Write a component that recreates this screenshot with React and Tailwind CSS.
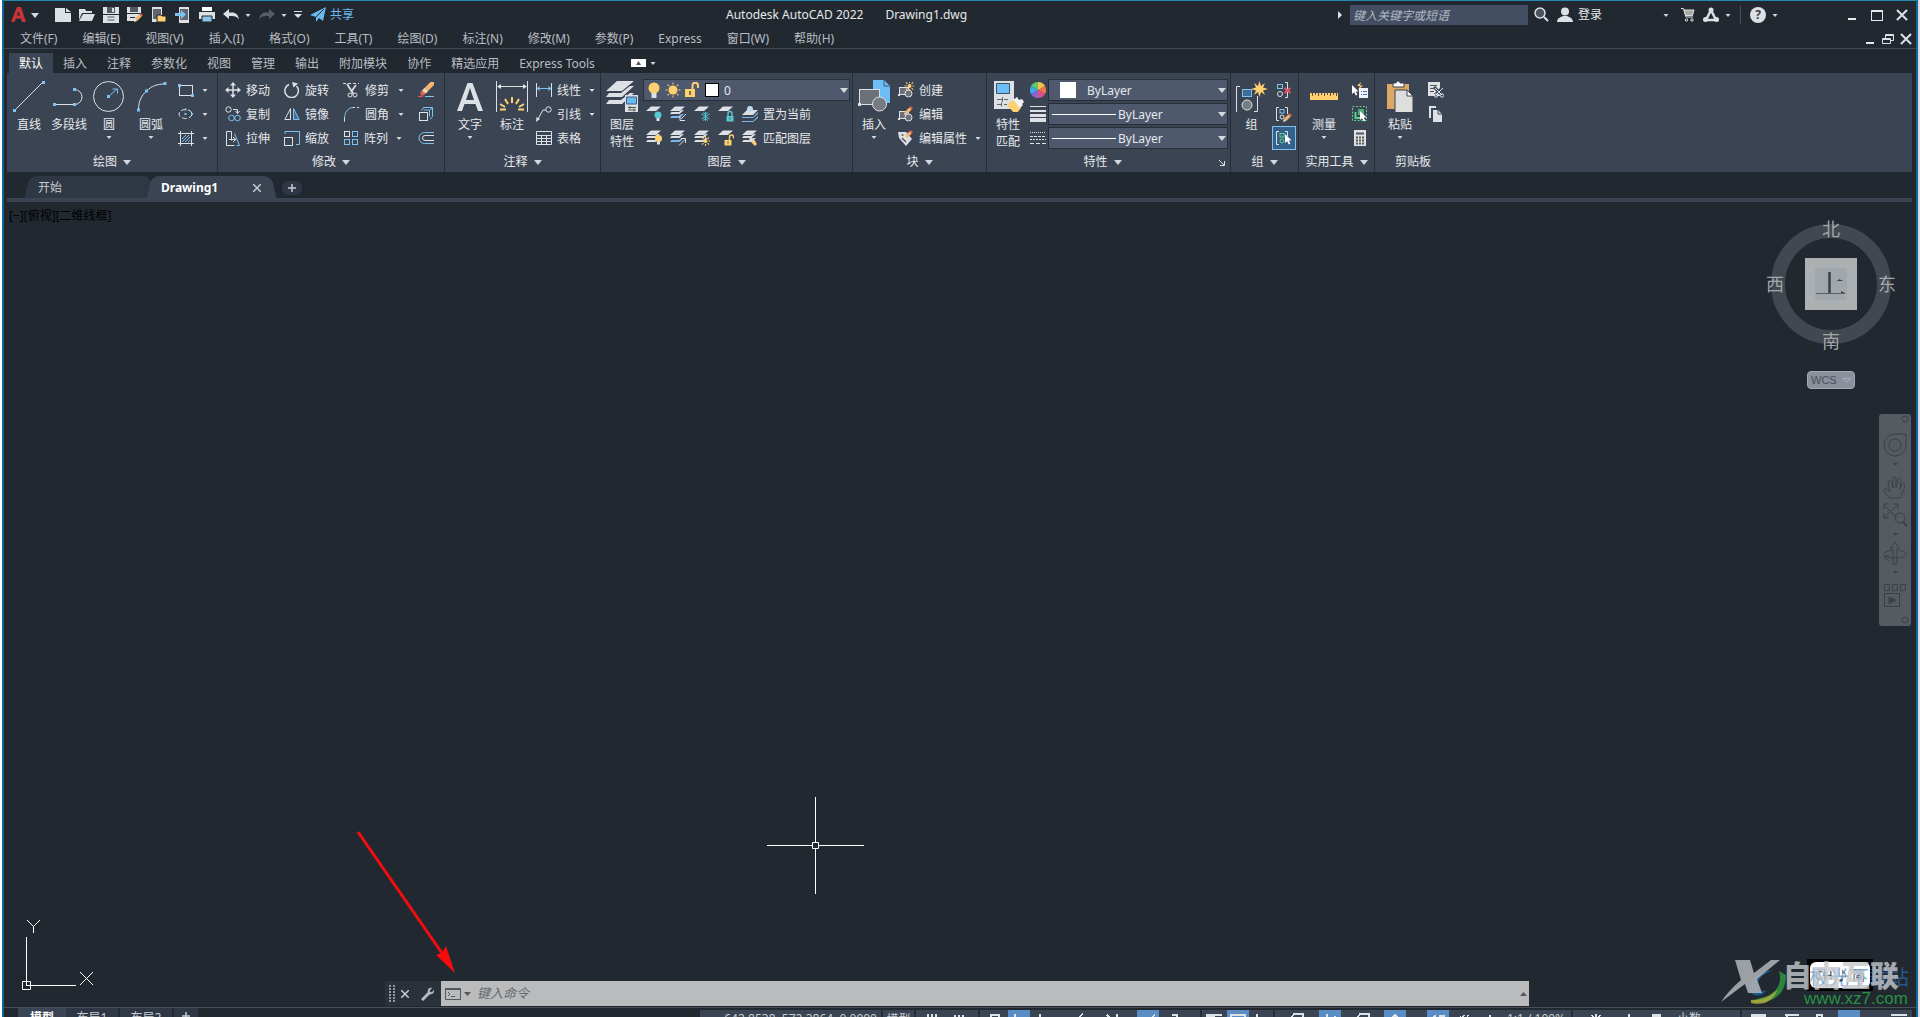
const W = "#dde0e4";
const B = "#7cc3f4";
const Y = "#ffd070";
const C = "#57c9d0";

const MENUS = ["文件(F)", "编辑(E)", "视图(V)", "插入(I)", "格式(O)", "工具(T)", "绘图(D)", "标注(N)", "修改(M)", "参数(P)", "Express", "窗口(W)", "帮助(H)"];
const TABS = ["默认", "插入", "注释", "参数化", "视图", "管理", "输出", "附加模块", "协作", "精选应用", "Express Tools"];

function Icon({ size = 16, children, className = "" }) {
  return (
    <svg width={size} height={size} viewBox={`0 0 ${size} ${size}`} fill="none" stroke={W} className={`shrink-0 ${className}`} aria-hidden="true">
      {children}
    </svg>
  );
}

function Caret({ large, className = "" }) {
  return large ? (
    <svg width="8" height="5" viewBox="0 0 8 5" className={`shrink-0 ${className}`} aria-hidden="true"><path d="M0 0h8L4 5z" fill="#d5d8dd" /></svg>
  ) : (
    <svg width="6" height="3" viewBox="0 0 6 3" className={`shrink-0 ${className}`} aria-hidden="true"><path d="M.5 0h5L3 3z" fill="#d5d8dd" /></svg>
  );
}

function Nodes({ at, s = 3 }) {
  return at.map(([x, y]) => <rect key={`${x}-${y}`} x={x - s / 2} y={y - s / 2} width={s} height={s} fill={B} stroke="none" />);
}

function Sheets({ n = 1, last = W }) {
  const tops = [0, 4, 8].slice(0, n);
  return (
    <g stroke="none">
      {tops.map((y, i) =>
        i === 0 ? (
          <path key={y} d="M5 0.5h10l-5 4.5H0z" fill={W} />
        ) : (
          <path key={y} d={`M1.5 ${y + 2}L0 ${y + 4}h9.5L14 ${y}h-2.5L9 ${y + 2}z`} fill={i === n - 1 ? last : W} />
        )
      )}
    </g>
  );
}

function Cursor({ x, y }) {
  return <path d={`M${x} ${y}v9l2.2-1.8 1.6 3.3 1.6-.8-1.6-3.2h2.8z`} fill="#fff" stroke="none" />;
}

function Pencil({ x, y }) {
  return (
    <g transform={`translate(${x} ${y})`} stroke="none">
      <path d="M0 9l1-3.2L3.2 8z" fill="#f3e3cf" />
      <path d="M1 5.8L5.5 1.3 7.7 3.5 3.2 8z" fill="#f2b56b" />
      <path d="M5.5 1.3L6.8 0 9 2.2 7.7 3.5z" fill="#dc5a52" />
    </g>
  );
}

function Bulb({ x, y, fill }) {
  return (
    <g stroke="none">
      <circle cx={x} cy={y} r="3.5" fill={fill} />
      <path d={`M${x - 1.5} ${y + 3}h3v3h-3z`} fill={W} />
    </g>
  );
}

function Sun({ x, y, r = 3 }) {
  return (
    <g stroke={Y}>
      <circle cx={x} cy={y} r={r} fill={Y} stroke="none" />
      {[0, 45, 90, 135, 180, 225, 270, 315].map((a) => (
        <path key={a} d={`M${x} ${y - r - 1}v-2`} transform={`rotate(${a} ${x} ${y})`} />
      ))}
    </g>
  );
}

function Lock({ x, y, fill, open }) {
  return (
    <g stroke={fill} strokeWidth="1.4">
      <path d={open ? `M${x + 5} ${y}v-3a2 2 0 0 1 4 0v1.5` : `M${x + 1.5} ${y}v-2.5a2 2 0 0 1 4 0V${y}`} />
      <rect x={x} y={y} width="7" height="5.5" fill={fill} stroke="none" />
      <path d={`M${x + 3.5} ${y + 1.5}v2`} stroke="#4a4f57" strokeWidth="1" />
    </g>
  );
}

function Block() {
  return (
    <g>
      <rect x="1.5" y="5.5" width="9" height="7" fill="#6b7079" />
      <circle cx="10.5" cy="11.5" r="3.5" fill="#6b7079" />
      <rect x="0" y="12" width="2" height="2" fill={W} stroke="none" />
    </g>
  );
}

const icons = {
  line: <Icon size={32}><path d="M1.5 30.5l28-28" /><Nodes at={[[1.5, 30.5], [30.5, 2.5]]} /></Icon>,
  pline: <Icon size={32}><path d="M1.5 24.5h20a7.5 7.5 0 0 0 0-15" /><Nodes at={[[1.5, 24.5], [21.5, 24.5], [21.5, 9.5]]} /></Icon>,
  circle: <Icon size={32}><circle cx="15.5" cy="16.5" r="15" /><path d="M15.5 16.5L24 9m-4.500 0H24.500v4.500" stroke={B} /><Nodes at={[[15.5, 16.5]]} /></Icon>,
  arc: <Icon size={32}><path d="M3.500 29.500c0-8 3-14 8-18.500 5-5 11-7 18-7" /><Nodes at={[[3.5, 30], [11.5, 11], [30, 3.5]]} /></Icon>,
  rect: <Icon><rect x="1.500" y="3.500" width="13" height="10" /><Nodes at={[[1.5, 3.5], [14.5, 13.5]]} /></Icon>,
  ellipse: <Icon><ellipse cx="7.500" cy="8" rx="6.500" ry="4.500" strokeDasharray="5 2" /><Nodes at={[[7.5, 8], [14, 8], [7.5, 3.5]]} s={2} /></Icon>,
  hatch: <Icon><path d="M0 3.500h16M0 13.500h16M2.500 1v15M13.500 1v15" /><path d="M4 9l4-4M4 12l7-7M7 12l5-5M10 12l2-2" stroke={B} /></Icon>,
  move: <Icon><path d="M8 1v14M1 8h14" strokeWidth="1.500" /><path d="M8 0l3 3.500H5zM8 16l3-3.500H5zM0 8l3.500-3v6zM16 8l-3.500-3v6z" fill={W} stroke="none" /></Icon>,
  copy: <Icon><circle cx="3.500" cy="3.500" r="2.700" /><circle cx="6.500" cy="12" r="2.800" stroke={B} /><circle cx="12.500" cy="12" r="2.800" stroke={B} /><path d="M8 3.500h4.500V7M10.500 5l2 2.500 2-2.500" /></Icon>,
  stretch: <Icon><path d="M9.500 15.500H1.500V1.500h5v9M4 9.500h6M8 7l3 2.500L8 12" /><path d="M9.500 3.500l5 12h-3" stroke={B} /></Icon>,
  rotate: <Icon><path d="M5 2.500A6.800 6.800 0 1 0 12.500 4" strokeWidth="1.500" /><path d="M8 0l6 1.500-4.500 4z" fill={W} stroke="none" /></Icon>,
  mirror: <Icon><path d="M6.500 2.500v11H.800z" /><path d="M9.500 2.500v11h5.700z" stroke={B} fill="#417095" /></Icon>,
  scale: <Icon><rect x=".500" y="7.500" width="8" height="8" /><path d="M1 4V1.500h14.500v13H12" stroke={B} /></Icon>,
  trim: <Icon><path d="M0 1.500h16" strokeDasharray="3 2" /><path d="M4 2l6.500 10M13 3L8 10" strokeWidth="1.700" /><circle cx="7" cy="13" r="2" /><circle cx="12" cy="13" r="2" /></Icon>,
  fillet: <Icon><path d="M1.500 15.500V13C1.500 6 5 2 10 1.500" stroke={B} /><path d="M1.500 15.500v-4M10 1.500h2m2 0h2" /></Icon>,
  array: <Icon><rect x="1.500" y="1.500" width="5" height="5" /><rect x="9.500" y="1.500" width="5" height="5" stroke={B} /><rect x="1.500" y="9.500" width="5" height="5" stroke={B} /><rect x="9.500" y="9.500" width="5" height="5" stroke={B} /></Icon>,
  erase: <Icon><path d="M0 14.500h5" stroke="#e0584f" /><path d="M7 14.500h9" stroke={B} /><path d="M3.500 9l9-9H16v3l-9 9z" fill="#f5b56c" stroke="none" /><path d="M3.500 9l3.500 3.200-1.500 1.300H2.500V10z" fill="#e55b5b" stroke="none" /><path d="M5.500 7L9 10.200" strokeWidth="2" /></Icon>,
  explode: <Icon><rect x="1.500" y="6.500" width="8" height="8" /><path d="M3.500 4.500l2-3h9v9l-2.500 3M5.500 4h6v6.500M12 4l2.500-2.500" stroke={B} /></Icon>,
  offset: <Icon><path d="M16 2.500H6.500a5.500 5.500 0 0 0 0 11H16" stroke={B} /><path d="M16 5.500H7a2.500 2.500 0 0 0 0 5H16" /></Icon>,
  dim: <Icon size={32}><path d="M.500 1v31M31.500 1v31M2 6.500h28" /><path d="M1 6.500L5 4v5zM31 6.500L27 4v5z" fill={W} stroke="none" /><path d="M16 17v6M9 19l3 5M23 19l-3 5M4 24l5 3M28 24l-5 3M4 29.500h6M22 29.500h6" stroke={Y} strokeWidth="2" /></Icon>,
  linear: <Icon><path d="M.500 1v14M15.500 1v14" /><path d="M1 6.500h14M4 4.500l-3 2 3 2M12 4.500l3 2-3 2" stroke={B} /></Icon>,
  leader: <Icon><circle cx="12.500" cy="3.500" r="2.700" /><path d="M10 4H7L2 13" /><path d="M0 16l.5-5 3.500 2z" fill={W} stroke="none" /></Icon>,
  table: <Icon><path d="M.500 1.500h15v13H.500zM.500 5.500h15M.500 8.500h15M.500 11.500h15M5.500 5v9M10.500 5v9" /></Icon>,
  layerProps: (
    <Icon size={32}>
      <g stroke="none" fill={W}>
        <path d="M11 1h17L16 11H0z" /><path d="M3 13l-3 4h16L28 6h-4L15 13z" /><path d="M3 20l-3 4h16L28 13h-4L15 20z" />
        <path d="M19 15h13v17H19z" /><path d="M20.500 17h10v7h-10z" fill="#6cb9f2" stroke="#3c5f80" />
        <path d="M22 27.500h8M22 30h8M24 26v3M28 28.500v3" stroke="#555" />
      </g>
    </Icon>
  ),
  layOff: <Icon><Sheets /><Bulb x={12} y={9} fill={C} /></Icon>,
  layIso: <Icon><Sheets n={3} last="#77b7ec" /><path d="M16 8l-5 5M10 9.500v5h5" /></Icon>,
  layFreeze: <Icon><Sheets /><path d="M11.500 6v9M7.500 8l8 5M15.500 8l-8 5M9 6.500l2.500 2 2.500-2M9 14.500l2.500-2 2.500 2" stroke={C} /></Icon>,
  layLock: <Icon><Sheets /><Lock x={8.5} y={10} fill={C} /></Icon>,
  layCurrent: <Icon><g stroke="none"><path d="M5 4h11l-5 5H0z" fill={W} /><circle cx="8" cy="3" r="3" fill="#bfd9ee" /><path d="M1.500 9.500L0 11h11l5-5v2l-5 4H0z" fill="#77b7ec" /><path d="M0 15h11l5-5v2l-5 4H0z" fill="#77b7ec" /></g></Icon>,
  layOn: <Icon><Sheets n={3} /><Bulb x={12.5} y={8.5} fill={Y} /></Icon>,
  layUniso: <Icon><Sheets n={3} last="#77b7ec" /><path d="M9 15.500l6-6M11 8.500h4.500V13" /></Icon>,
  layThaw: <Icon><Sheets n={3} /><Sun x={11.5} y={11} r={2} /></Icon>,
  layUnlock: <Icon><Sheets /><Lock x={6.5} y={10} fill={Y} open /></Icon>,
  layMatch: <Icon><Sheets n={3} /><path d="M8 8l5 5" strokeWidth="3" /><path d="M11 10l4 4-2 2-4-4z" fill={Y} stroke="none" /></Icon>,
  insert: <Icon size={32}><path d="M15 0h11l6 6v17H15z" fill="#6dbdf7" stroke="none" /><path d="M26 0v6h6" stroke="#3a5a78" /><rect x="1.500" y="9.500" width="20" height="15" fill="#6b7079" /><circle cx="21.500" cy="24" r="7" fill="#777b82" /><rect x="0" y="23" width="3" height="3" fill={W} stroke="none" /></Icon>,
  create: <Icon><Block /><Sun x={11.5} y={4} r={2} /></Icon>,
  edit: <Icon><Block /><Pencil x={6} y={0} /></Icon>,
  editAttr: <Icon><path d="M0 2h8l6 7-6 7-7-8z" fill={W} stroke="none" /><path d="M3.500 5l2 0M4 8l4 4" stroke="#555" strokeWidth="1.500" /><Pencil x={6} y={0} /></Icon>,
  matchProps: <Icon size={32}><path d="M2 1h20v28H2z" fill={W} stroke="none" /><path d="M4.500 3.500h13v10h-13z" fill="#6dbdf7" stroke="#3c5265" /><path d="M5 19.500h5M12 19.500h4M5 24.500h4M12 24.500h3M10.500 17v5M9.500 22.500v4" stroke="#666" /><path d="M15 25l6-5 8 8-4 5h-3z" fill={Y} stroke="none" /><path d="M21 20l4-3 2 3 3-1 2 3-2 2 1 1-3 3z" fill="#f3f3f3" stroke="none" /></Icon>,
  wheel: (
    <Icon>
      <g stroke="none">
        <path d="M8 8V0a8 8 0 0 1 7 4z" fill="#f5c34c" /><path d="M8 8l7-4a8 8 0 0 1 0 8z" fill="#f0754c" /><path d="M8 8l7 4a8 8 0 0 1-7 4z" fill="#d9508b" />
        <path d="M8 8v8a8 8 0 0 1-7-4z" fill="#8a63d8" /><path d="M8 8l-7 4a8 8 0 0 1 0-8z" fill="#41a5e8" /><path d="M8 8L1 4a8 8 0 0 1 7-4z" fill="#62c370" />
      </g>
    </Icon>
  ),
  weights: <Icon><g fill={W} stroke="none"><path d="M0 0h16v1H0zM0 4h16v2H0zM0 8h16v3H0zM0 12h16v4H0z" /></g></Icon>,
  types: <Icon><path d="M0 2.500h16" strokeDasharray="1 1" /><path d="M0 6.500h16" strokeDasharray="3 1" /><path d="M0 9.500h16" strokeDasharray="2 1" /><path d="M0 13.500h16" strokeDasharray="4 2" /></Icon>,
  group: <Icon size={32}><path d="M4 6.500H.500v26H4M18 31.500h3.500V16" /><rect x="6.500" y="9.500" width="9" height="7" fill="#3d6c96" stroke={B} /><circle cx="11" cy="25" r="5" fill="#777b82" /><path d="M23.500 1l1.500 5 4-3-2 4.500 5 1.500-5 1.500 2 4.500-4-3-1.500 5-1.500-5-4 3 2-4.500-5-1.500 5-1.500-2-4.500 4 3z" fill={Y} stroke="none" /></Icon>,
  ungroup: <Icon><rect x="1.500" y="2.500" width="5" height="4" stroke={B} /><circle cx="4" cy="12" r="2.500" /><path d="M9 .500h2.500v15H9" /><path d="M8.500 6l6 5M14.500 6l-6 5" stroke="#e5546a" strokeWidth="2" /></Icon>,
  groupEdit: <Icon><path d="M3 1.500H.500v13H3M9 1.500h2.500V8" /><rect x="4" y="3.500" width="4" height="3.500" stroke={B} /><circle cx="6" cy="11" r="2" /><Pencil x={7} y={7} /></Icon>,
  groupSel: <Icon><path d="M3 1.500H.500v13H3M9 1.500h2.500V6" /><rect x="4" y="3.500" width="4" height="3.500" stroke="#5fcf8e" /><circle cx="6" cy="11" r="2" stroke="#5fcf8e" /><Cursor x={9} y={4} /></Icon>,
  measure: <Icon size={32}><path d="M2 13h28v7H2z" fill={Y} stroke="none" /><path d="M4.500 13v3M7.500 13v2M10.500 13v3M13.500 13v2M16.500 13v3M19.500 13v2M22.500 13v3M25.500 13v2M28.500 13v3" stroke="#5a5140" /></Icon>,
  quickSel: <Icon><path d="M9 0L5 4h3L6 8l5-4.500H8z" fill={Y} stroke="none" /><rect x="7" y="6" width="9" height="10" fill="#eef2f6" stroke="none" /><path d="M9 9.500h1M11 9.500h4M9 12.500h1M11 12.500h4" stroke="#3d79b4" /><Cursor x={0} y={3} /></Icon>,
  selectAll: <Icon><rect x=".500" y=".500" width="14" height="14" stroke="#5fcf8e" strokeDasharray="2 1.500" /><path d="M6 3h6v6H6z" fill="#4cae75" stroke="none" /><path d="M3.500 6v6h6" stroke="#5fcf8e" strokeWidth="2" /><Cursor x={8} y={5} /></Icon>,
  calc: <Icon><path d="M2 0h12v16H2z" fill={W} stroke="none" /><path d="M4 3.500h8" stroke="#555" strokeWidth="2" /><path d="M4 7.500h8M4 10.500h8M4 13.500h8" stroke="#555" strokeWidth="2" strokeDasharray="2 1" /></Icon>,
  paste: <Icon size={32}><path d="M3 4h22v25H3z" fill="#dca866" stroke="none" /><path d="M9 7V3h3a2 2 0 0 1 4 0h4v4z" fill="#fff" stroke="#3b4453" strokeWidth="1" /><path d="M11 10h12l6 6v17H11z" fill="#dedede" stroke="#3b4453" /><path d="M23 10v6h6z" fill="#fff" stroke="#3b4453" /></Icon>,
  cut: <Icon><path d="M0 0h12v14H0z" fill={W} stroke="none" /><path d="M2 3.500h7M2 6.500h6M2 9.500h4" stroke="#555" /><path d="M6 5l8 8M15 5l-8 8" stroke="#3b4453" strokeWidth="3" /><path d="M7 6l7 7M15 6l-7 7" /><circle cx="8" cy="13.500" r="1.700" /><circle cx="14" cy="13.500" r="1.700" /></Icon>,
  copyClip: <Icon><path d="M1 0h7v2H3v10H1z" fill={W} stroke="none" /><path d="M5 4h5l4 4v8H5z" fill={W} stroke="none" /><path d="M10 4v4h4" stroke="#3b4453" /></Icon>,
};

const quick = {
  fresh: <Icon><path d="M0 1h10v5h6v9H0z" fill={W} stroke="none" /><path d="M11 1l5 4h-5z" fill={W} stroke="none" /></Icon>,
  open: <Icon><path d="M0 2h6l1 2h6v2H3L0 13z" fill={W} stroke="none" /><path d="M4 7h12l-3 7H0z" fill={W} stroke="none" /></Icon>,
  save: <Icon><path d="M0 0h16v16H0z" fill={W} stroke="none" /><path d="M4 0h8v6H4z" fill="#555a62" stroke="none" /><path d="M9 1h2v4H9z" fill={W} stroke="none" /><path d="M0 7.500h16" stroke="#222831" /><path d="M4.500 10h7M4.500 13h7" stroke="#555a62" /></Icon>,
  saveAs: <Icon><path d="M0 0h14v7L8 14H0z" fill={W} stroke="none" /><path d="M3 0h8v5H3z" fill="#555a62" stroke="none" /><path d="M0 6.500h14M3 10.500h5" stroke="#222831" /><Pencil x={7} y={6} /></Icon>,
  fromWeb: <Icon><path d="M1 0h10v15H1z" fill={W} stroke="none" /><path d="M2 2h8v10H2z" fill="#606570" stroke="none" /><path d="M6 8h4l1 1h4v6H6z" fill={Y} stroke="#222831" /></Icon>,
  toWeb: <Icon><path d="M4 0h10v16H4z" fill={W} stroke="none" /><path d="M5 2h8v11H5z" fill="#606570" stroke="none" /><path d="M0 6h6V3l5 4.500L6 12V9H0z" fill={B} stroke="none" /></Icon>,
  print: <Icon><path d="M3 0h10v4H3z" fill="#fff" stroke="none" /><path d="M0 5h16v7H0z" fill={W} stroke="none" /><path d="M3 9h10v6H3z" fill="#8bc4ea" stroke="#222831" /></Icon>,
  undo: <Icon><path d="M0 7l6-5v3.500h3c4 0 6 2 7 7-2-3-4-3.500-7-3.500H6V12z" fill={W} stroke="none" /></Icon>,
  redo: <Icon><path d="M16 7l-6-5v3.500H7c-4 0-6 2-7 7 2-3 4-3.500 7-3.500h3V12z" fill="#565d68" stroke="none" /></Icon>,
  share: <Icon><path d="M0 8L16 0l-3 14-4-3-3 4v-5z" fill="#6bb8ee" stroke="none" /><path d="M6 10l8-8" stroke="#222831" /></Icon>,
};

function BigButton({ icon, label, label2, caret, className }) {
  return (
    <button type="button" className={`flex flex-col items-center pt-[2px] ${className}`}>
      {icon}
      <span className="mt-1 h-[18px] leading-[18px] whitespace-nowrap">{label}</span>
      {label2 && <span className="h-4 leading-4">{label2}</span>}
      {caret && <Caret className="mt-[2px]" />}
    </button>
  );
}

function SmallButton({ icon, label, caret, name, className = "" }) {
  return (
    <button type="button" aria-label={label || name} className={`flex h-6 items-center gap-[5px] whitespace-nowrap ${className}`}>
      {icon}
      {label && <span className="pt-[2px]">{label}</span>}
      {caret && <Caret className="ml-[3px]" />}
    </button>
  );
}

function Panel({ title, arrow = true, launcher, last, className, children }) {
  return (
    <section className={`flex shrink-0 flex-col ${last ? "" : "border-r border-[#262c36]"} ${className}`}>
      <div className="flex h-[77px] pt-[5px]">{children}</div>
      <div className={`relative flex h-[22px] items-center justify-center pt-[2px] ${launcher ? "pr-3" : ""}`}>
        <button type="button" className="flex items-center gap-[6px] leading-5">
          {title}
          {arrow && <Caret large />}
        </button>
        {launcher && (
          <svg width="6" height="6" viewBox="0 0 6 6" className="absolute right-[5px] top-[10px]" stroke={W} fill="none"><path d="M0 0l5 5M5.500 1v4.500H1" /></svg>
        )}
      </div>
    </section>
  );
}

function Combo({ label, value, className, children }) {
  return (
    <div className="relative flex h-[22px] items-center">
      <select aria-label={label} className={`h-full w-full appearance-none border border-[#272e3a] bg-[#4e596e] pt-[2px] text-[#e6e8eb] ${className}`}>
        <option>{value}</option>
      </select>
      <div className="pointer-events-none absolute inset-y-0 left-0 flex items-center">{children}</div>
      <Caret large className="pointer-events-none absolute right-[2px]" />
    </div>
  );
}

function Ribbon() {
  return (
    <div className="ml-[3px] mr-1 flex h-[99px] shrink-0 overflow-hidden bg-[#3b4453] text-[#e6e8eb]">
      <Panel title="绘图" className="w-[211px]">
        <BigButton icon={icons.line} label="直线" className="ml-[2px] w-10" />
        <BigButton icon={icons.pline} label="多段线" className="w-10" />
        <BigButton icon={icons.circle} label="圆" caret className="w-10" />
        <BigButton icon={icons.arc} label="圆弧" caret className="w-11" />
        <div className="ml-[5px]">
          <SmallButton icon={icons.rect} name="矩形" caret />
          <SmallButton icon={icons.ellipse} name="椭圆" caret />
          <SmallButton icon={icons.hatch} name="图案填充" caret />
        </div>
      </Panel>
      <Panel title="修改" className="w-[227px]">
        <div className="flex gap-[14px] pl-[7px]">
          <div>
            <SmallButton icon={icons.move} label="移动" />
            <SmallButton icon={icons.copy} label="复制" />
            <SmallButton icon={icons.stretch} label="拉伸" />
          </div>
          <div>
            <SmallButton icon={icons.rotate} label="旋转" />
            <SmallButton icon={icons.mirror} label="镜像" />
            <SmallButton icon={icons.scale} label="缩放" />
          </div>
          <div className="w-[61px]">
            <SmallButton icon={icons.trim} label="修剪" caret className="w-full justify-between" />
            <SmallButton icon={icons.fillet} label="圆角" caret className="w-full justify-between" />
            <SmallButton icon={icons.array} label="阵列" caret />
          </div>
          <div>
            <SmallButton icon={icons.erase} name="删除" />
            <SmallButton icon={icons.explode} name="分解" />
            <SmallButton icon={icons.offset} name="偏移" />
          </div>
        </div>
      </Panel>
      <Panel title="注释" className="w-[156px]">
        <BigButton
          icon={<Icon size={32}><path d="M3 31L13.500 3h5L29 31h-5l-2.500-7h-11L8 31zM12 20h8L16 8z" fill={W} stroke="none" fillRule="evenodd" /></Icon>}
          label="文字"
          caret
          className="ml-1 w-[42px]"
        />
        <BigButton icon={icons.dim} label="标注" className="w-[42px]" />
        <div className="ml-[3px]">
          <SmallButton icon={icons.linear} label="线性" caret />
          <SmallButton icon={icons.leader} label="引线" caret />
          <SmallButton icon={icons.table} label="表格" />
        </div>
      </Panel>
      <Panel title="图层" className="w-[252px]">
        <BigButton icon={icons.layerProps} label="图层" label2="特性" className="ml-px w-10" />
        <div className="flex-1 pr-[2px]">
          <div className="h-6 pl-px pt-px">
            <Combo label="图层" value="0" className="pl-[80px]">
              <div className="flex items-center gap-[3px] pl-[3px]">
                <Icon><circle cx="8" cy="6" r="5.500" fill={Y} stroke="none" /><path d="M5.500 11h5v5h-5z" fill={W} stroke="none" /></Icon>
                <Icon><Sun x={8} y={8} r={4.500} /></Icon>
                <Icon><path d="M1 7h10v8H1z" fill={Y} stroke="none" /><path d="M8.500 7V3.500a2.700 2.700 0 0 1 5.500 0V6" stroke={Y} strokeWidth="2" /><path d="M6 9v4" stroke="#555" strokeWidth="1.500" /></Icon>
                <span className="ml-[2px] size-[14px] border border-black bg-white" />
              </div>
            </Combo>
          </div>
          <div className="flex">
            <SmallButton icon={icons.layOff} name="关" className="w-6 justify-center" />
            <SmallButton icon={icons.layIso} name="隔离" className="w-6 justify-center" />
            <SmallButton icon={icons.layFreeze} name="冻结" className="w-6 justify-center" />
            <SmallButton icon={icons.layLock} name="锁定" className="w-6 justify-center" />
            <SmallButton icon={icons.layCurrent} label="置为当前" className="pl-1" />
          </div>
          <div className="flex">
            <SmallButton icon={icons.layOn} name="打开所有图层" className="w-6 justify-center" />
            <SmallButton icon={icons.layUniso} name="取消隔离" className="w-6 justify-center" />
            <SmallButton icon={icons.layThaw} name="解冻所有图层" className="w-6 justify-center" />
            <SmallButton icon={icons.layUnlock} name="解锁" className="w-6 justify-center" />
            <SmallButton icon={icons.layMatch} label="匹配图层" className="pl-1" />
          </div>
        </div>
      </Panel>
      <Panel title="块" className="w-[134px]">
        <BigButton icon={icons.insert} label="插入" caret className="w-[42px]" />
        <div className="ml-[3px]">
          <SmallButton icon={icons.create} label="创建" />
          <SmallButton icon={icons.edit} label="编辑" />
          <SmallButton icon={icons.editAttr} label="编辑属性" caret />
        </div>
      </Panel>
      <Panel title="特性" launcher className="w-[244px]">
        <BigButton icon={icons.matchProps} label="特性" label2="匹配" className="w-[42px]" />
        <div className="ml-px mr-[2px]">
          <SmallButton icon={icons.wheel} name="对象颜色" />
          <SmallButton icon={icons.weights} name="线宽" />
          <SmallButton icon={icons.types} name="线型" />
        </div>
        <div className="flex flex-1 flex-col gap-[2px] pr-[2px] pt-px">
          <Combo label="对象颜色" value="ByLayer" className="pl-[38px]">
            <span className="ml-3 size-4 bg-white" />
          </Combo>
          <Combo label="线宽" value="ByLayer" className="pl-[69px]">
            <span className="ml-1 h-px w-16 bg-white" />
          </Combo>
          <Combo label="线型" value="ByLayer" className="pl-[69px]">
            <span className="ml-1 h-px w-16 bg-white" />
          </Combo>
        </div>
      </Panel>
      <Panel title="组" className="w-[68px]">
        <BigButton icon={icons.group} label="组" className="w-[41px]" />
        <div>
          <SmallButton icon={icons.ungroup} name="解除编组" className="w-6 justify-center" />
          <SmallButton icon={icons.groupEdit} name="组编辑" className="w-6 justify-center" />
          <SmallButton icon={icons.groupSel} name="启用组选择" className="w-6 justify-center border border-[#7cc3f4] bg-[#35608a]" />
        </div>
      </Panel>
      <Panel title="实用工具" className="w-[76px]">
        <BigButton icon={icons.measure} label="测量" caret className="w-[50px]" />
        <div className="ml-[3px]">
          <SmallButton icon={icons.quickSel} name="快速选择" />
          <SmallButton icon={icons.selectAll} name="全部选择" />
          <SmallButton icon={icons.calc} name="快速计算器" />
        </div>
      </Panel>
      <Panel title="剪贴板" arrow={false} last className="w-[76px]">
        <BigButton icon={icons.paste} label="粘贴" caret className="w-[50px]" />
        <div className="ml-[3px]">
          <SmallButton icon={icons.cut} name="剪切" />
          <SmallButton icon={icons.copyClip} name="复制剪裁" />
        </div>
      </Panel>
    </div>
  );
}

function TitleBar() {
  return (
    <header className="flex h-[26px] shrink-0 items-center pr-2 pt-[2px] text-[#e6e8eb]">
      <button type="button" aria-label="应用程序" className="ml-[7px] flex items-center gap-1">
        <Icon><path d="M0 15L6 0h4l5 15h-4l-1-3.500H5L3.500 15zM6 8.500h3L7.500 4z" fill="#c9343b" stroke="none" fillRule="evenodd" /></Icon>
        <Caret large />
      </button>
      <div className="ml-4 flex items-center gap-2">
        <button type="button" aria-label="新建">{quick.fresh}</button>
        <button type="button" aria-label="打开">{quick.open}</button>
        <button type="button" aria-label="保存">{quick.save}</button>
        <button type="button" aria-label="另存为">{quick.saveAs}</button>
        <button type="button" aria-label="从 Web 打开">{quick.fromWeb}</button>
        <button type="button" aria-label="保存到 Web">{quick.toWeb}</button>
        <button type="button" aria-label="打印">{quick.print}</button>
        <button type="button" aria-label="放弃" className="flex items-center gap-[6px]">{quick.undo}<Caret /></button>
        <button type="button" aria-label="重做" className="flex items-center gap-[6px]">{quick.redo}<Caret /></button>
      </div>
      <button type="button" aria-label="自定义" className="ml-[7px]">
        <svg width="8" height="8" viewBox="0 0 8 8" fill={W}><path d="M0 0h8v1H0zM0 3h8L4 7z" /></svg>
      </button>
      <button type="button" className="ml-2 flex w-[416px] items-center gap-1 text-[#6bb8ee]">{quick.share}共享</button>
      <h1 className="flex gap-[22px] whitespace-nowrap">
        <span>Autodesk AutoCAD 2022</span>
        <span>Drawing1.dwg</span>
      </h1>
      <div className="ml-auto flex items-center">
        <svg width="4" height="8" viewBox="0 0 4 8" fill={W} className="mr-2"><path d="M0 0l4 4-4 4z" /></svg>
        <input aria-label="搜索" placeholder="键入关键字或短语" className="h-5 w-[178px] bg-[#434e62] px-[3px] italic placeholder:text-[#b4bac4]" />
        <button type="button" aria-label="查找" className="ml-[6px]">
          <Icon><circle cx="6" cy="6" r="5" fill="#4b535f" strokeWidth="1.500" /><path d="M10 10l4 4" strokeWidth="2" /></Icon>
        </button>
        <button type="button" className="ml-[7px] flex w-[103px] items-center gap-[5px]">
          <Icon><circle cx="8" cy="4.500" r="4" fill={W} stroke="none" /><path d="M0 15c0-4 4-5 6-6h4c2 1 6 2 6 6z" fill={W} stroke="none" /></Icon>
          登录
        </button>
        <Caret className="ml-[3px]" />
        <button type="button" aria-label="应用商店" className="ml-3">
          <Icon><path d="M0 1.500h2.500L5 10h7" /><path d="M3 3h10l-1.500 5.500H4.500z" fill="#aaa99e" /><circle cx="5.500" cy="13" r="1.200" /><circle cx="11" cy="13" r="1.200" /></Icon>
        </button>
        <button type="button" aria-label="Autodesk App" className="ml-[6px] flex items-center gap-[6px]">
          <Icon><path d="M8 3L3 13M8 3l5 10M4 13h8" strokeWidth="2.500" /><circle cx="8" cy="3" r="2.500" fill={W} stroke="none" /><circle cx="2.500" cy="12.500" r="2.500" fill={W} stroke="none" /><circle cx="13.500" cy="12.500" r="2.500" fill={W} stroke="none" /></Icon>
          <Caret />
        </button>
        <span className="ml-[9px] h-[18px] w-px bg-[#4b525d]" />
        <button type="button" aria-label="帮助" className="ml-[9px] flex items-center gap-[6px]">
          <span className="flex size-4 items-center justify-center rounded-full bg-[#dde0e4] font-bold leading-4 text-[#3b3f46]">?</span>
          <Caret />
        </button>
        <button type="button" aria-label="最小化" className="ml-[70px] mt-2 h-[2px] w-2 bg-[#e6e8eb]" />
        <button type="button" aria-label="最大化" className="ml-[15px] h-[11px] w-3 border border-t-2 border-[#e6e8eb]" />
        <button type="button" aria-label="关闭" className="ml-[13px]">
          <svg width="12" height="12" viewBox="0 0 12 12" stroke={W} strokeWidth="2"><path d="M1 1l10 10M11 1L1 11" /></svg>
        </button>
      </div>
    </header>
  );
}

function MenuBar() {
  return (
    <nav className="flex h-[22px] shrink-0 items-center border-b border-[#414a58] pl-4 pr-1 pt-[2px] text-[#b9bdc3]">
      <div className="flex gap-[25px]">
        {MENUS.map((m) => (
          <button key={m} type="button" className="whitespace-nowrap leading-[18px]">{m}</button>
        ))}
      </div>
      <div className="ml-auto flex items-center">
        <button type="button" aria-label="最小化图形" className="mt-2 h-[2px] w-2 bg-[#e6e8eb]" />
        <button type="button" aria-label="还原图形" className="ml-2">
          <svg width="12" height="12" viewBox="0 0 12 12" stroke={W} fill="none"><path d="M.500 5.500h8v5h-8zM.500 6.500h8M3.500 5V1.500h8v6H9M3.500 2.500h8" /></svg>
        </button>
        <button type="button" aria-label="关闭图形" className="ml-[6px]">
          <svg width="12" height="12" viewBox="0 0 12 12" stroke={W} strokeWidth="2"><path d="M1 1l10 10M11 1L1 11" /></svg>
        </button>
      </div>
    </nav>
  );
}

function RibbonTabs() {
  return (
    <div className="flex h-6 shrink-0 items-end pl-[5px] text-[#b9bdc3]">
      {TABS.map((t, i) => (
        <button key={t} type="button" className={`h-5 whitespace-nowrap px-[10px] pt-px leading-5 ${i === 0 ? "bg-[#3b4453] text-white" : ""}`}>{t}</button>
      ))}
      <button type="button" aria-label="最小化功能区" className="ml-[26px] flex h-5 items-center gap-1">
        <span className="flex h-2 w-[15px] items-center justify-center bg-white">
          <svg width="5" height="4" viewBox="0 0 5 4" fill="#555"><path d="M0 4h5L2.500 0z" /></svg>
        </span>
        <Caret />
      </button>
    </div>
  );
}

function FileTabs() {
  return (
    <div className="ml-[3px] mr-1 flex h-[30px] shrink-0 items-end border-b-4 border-[#3b4453] text-[#c8ccd2]">
      <button type="button" className="relative isolate ml-5 h-[22px] w-[122px] pl-[11px] pt-px text-left before:absolute before:inset-0 before:-z-10 before:-skew-x-12 before:rounded-t-lg before:bg-[#303744]">开始</button>
      <div className="relative isolate flex h-[22px] w-[125px] items-center justify-between pl-3 pr-[13px] pt-px before:absolute before:inset-y-0 before:left-0 before:right-6 before:-z-10 before:-skew-x-12 before:rounded-tl-lg before:bg-[#3b4453] after:absolute after:inset-y-0 after:left-6 after:right-0 after:-z-10 after:skew-x-12 after:rounded-tr-lg after:bg-[#3b4453]">
        <button type="button" className="font-bold text-white">Drawing1</button>
        <button type="button" aria-label="关闭 Drawing1">
          <svg width="8" height="8" viewBox="0 0 8 8" stroke="#c8ccd2" strokeWidth="1.500"><path d="M0 0l8 8M8 0L0 8" /></svg>
        </button>
      </div>
      <button type="button" aria-label="新图形" className="ml-2 mb-[3px] flex h-[14px] w-5 items-center justify-center rounded-md bg-[#303744]">
        <svg width="8" height="8" viewBox="0 0 8 8" stroke="#c8ccd2" strokeWidth="1.500"><path d="M0 4h8M4 0v8" /></svg>
      </button>
    </div>
  );
}

function ViewCube() {
  return (
    <div className="absolute right-5 top-[18px] h-[170px] w-[130px] text-[18px] leading-[18px] text-[#a4a7aa]">
      <div className="absolute left-[5px] top-[4px] size-[120px] rounded-full border-[14px] border-[#42484f]" />
      <span className="absolute left-14 top-0">北</span>
      <span className="absolute left-0 top-[55px]">西</span>
      <span className="absolute right-0 top-[55px]">东</span>
      <span className="absolute left-14 top-[112px]">南</span>
      <button type="button" aria-label="上" className="absolute left-[39px] top-[38px] flex size-[52px] items-center justify-center bg-[#adb0b2]">
        <span className="flex size-8 items-center justify-center bg-[#a0a8ad]">
          <svg width="32" height="32" viewBox="0 0 32 32" stroke="#3d4145" fill="none"><path d="M14.500 4v21" strokeWidth="2.500" /><path d="M1 25.500h29M22 12.500h5" strokeOpacity=".7" /><path d="M26 23l4 2h-4zM24 11l4 2h-5z" fill="#3d4145" stroke="none" /></svg>
        </span>
      </button>
      <button type="button" className="absolute left-[41px] top-[151px] flex h-[18px] w-12 items-center justify-between rounded-[4px] border border-[#a3a8b3] bg-[#8a909c] px-[3px] font-['Liberation_Sans',sans-serif] text-[11px] leading-4 text-[#4a4f59]">
        WCS
        <svg width="8" height="5" viewBox="0 0 8 5" fill="none" stroke="#a9aebb"><path d="M0 .500h8L4 4.500z" /></svg>
      </button>
    </div>
  );
}

function NavBar() {
  return (
    <div className="absolute right-[5px] top-[212px] flex h-[212px] w-8 flex-col items-center rounded-[3px] bg-[#555b61]">
      <svg width="32" height="212" viewBox="0 0 32 212" fill="none" stroke="#3c4147">
        <circle cx="26" cy="5" r="3" /><circle cx="26" cy="206" r="3" />
        <path d="M16 20h11v11a11 11 0 1 1-11-11z" /><circle cx="16" cy="31" r="6" />
        <path d="M11 84l-6-7c-1-3 2-3 4-1l2 2-2-10c0-2 3-2 3 0l2 6V64c0-2 3-2 3 0v10l2-9c1-2 3-1 3 1l-1 9 2-5c1-2 3-1 3 1-1 5-3 9-5 13z" />
        <path d="M5 91l13 13M19 90L5 104M5 95v-5h5M14 90h5v5M5 99v5h5" /><circle cx="21" cy="104" r="5" /><path d="M24 108l4 4" strokeWidth="2" />
        <path d="M14 150v-16h-3l5-6 4 6h-2v16z" /><path d="M13 136c-6 1-9 3-8 5 2 4 20 4 22 0 1-3-3-4-8-5M10 147l-5-4 5-2" />
        <path d="M5.500 170.500h5v6h-5zM13.500 170.500h5v6h-5zM21.500 170.500h5v6h-5zM5.500 179.500h15v13h-15z" /><path d="M10 183l7 3-7 4z" fill="#3c4147" />
        <path d="M14 49h5l-2.500 3zM14 119h5l-2.500 3zM14 157h5l-2.500 3z" fill="#3c4147" stroke="none" />
      </svg>
    </div>
  );
}

function Watermark() {
  return (
    <div className="absolute bottom-0 right-[5px] h-[50px] w-[193px]">
      <div className="absolute left-[89px] top-[2px] flex h-8 w-[66px] items-center justify-center bg-black">
        <span className="flex h-[26px] w-[60px] items-center justify-center rounded-md bg-white text-[13px] text-[#444]">CH ♪ 简</span>
      </div>
      <svg width="190" height="50" viewBox="0 0 190 50" className="absolute left-0 top-0">
        <path d="M56 13c-18 2-26 11-23 23 4 4 13 3 15-3-5 3-10 1-9-5 1-7 7-12 17-15z" fill="#1d66aa" opacity=".8" />
        <path d="M61 14c4 14-4 24-19 27l-9 4c18 3 35-5 35-27z" fill="#2f9440" opacity=".85" />
        <path d="M33 43c11 0 20-3 27-11-5 12-14 17-27 14z" fill="#b5b33e" opacity=".8" />
        <path d="M17 3h15l4 13L53 3h9L39 22l5 14H30l-3-9L3 45c5-8 12-15 20-22z" fill="#b2b4b8" opacity=".85" />
      </svg>
      <span className="absolute left-[91px] top-[9px] whitespace-nowrap text-[20px] leading-6 text-[#2c78c4] opacity-60">极光下载站</span>
      <span className="absolute left-[65px] top-[4px] whitespace-nowrap text-[29px] font-black leading-[30px] text-[#c5c8cd] opacity-80">自由互联</span>
      <span className="absolute left-[86px] top-[34px] font-['Liberation_Sans',sans-serif] text-[17px] leading-4 text-[#279246]">www.xz7.com</span>
    </div>
  );
}

function Canvas() {
  return (
    <main className="relative min-h-0 flex-1 overflow-hidden bg-[#222830]">
      <div className="absolute left-[5px] top-1 leading-5 text-black">[−][俯视][二维线框]</div>
      <ViewCube />
      <NavBar />
      <svg width="97" height="97" viewBox="0 0 97 97" stroke="#fff" fill="none" className="absolute bottom-[113px] left-[763px]">
        <path d="M48.500 0v45M48.500 52v45M0 48.500h45M52 48.500h45M45.500 45.500h6v6h-6z" />
      </svg>
      <svg width="80" height="74" viewBox="0 0 80 74" stroke="#fff" fill="none" className="absolute bottom-[14px] left-[17px]">
        <path d="M1.500 62.500h8v8h-8zM5.500 67V18M5 66.500h50" />
        <path d="M6 1l6.500 6.500L19 1M12.500 7v7M59 53l13 13M72 53L59 66" />
      </svg>
      <svg width="106" height="148" viewBox="0 0 106 148" className="absolute bottom-[30px] left-[350px]">
        <path d="M4 3l86 124" stroke="#f50d0d" strokeWidth="3" />
        <path d="M101 144L82 126l6-2 4-7z" fill="#f50d0d" />
      </svg>
      <Watermark />
      <form className="absolute bottom-px left-[381px] right-[387px] flex h-[25px] items-center bg-[#2b313b]" onSubmit={(e) => e.preventDefault()}>
        <svg width="6" height="18" viewBox="0 0 6 18" className="ml-1" stroke="#b8bbc0" strokeWidth="1.500" strokeDasharray="2 1"><path d="M1 0v18M5 0v18" /></svg>
        <button type="button" aria-label="关闭命令行" className="ml-[6px]">
          <svg width="8" height="8" viewBox="0 0 8 8" stroke="#c8ccd2" strokeWidth="1.500"><path d="M0 0l8 8M8 0L0 8" /></svg>
        </button>
        <button type="button" aria-label="自定义命令行" className="ml-3 mr-[6px]">
          <Icon size={14}><path d="M1 13l7-7" stroke="#b8bbc0" strokeWidth="3" /><path d="M13 3l-2.500 2.500L8.500 4 11 1C8 0 6 3 7 6s7 1 6-3z" fill="#b8bbc0" stroke="none" /></Icon>
        </button>
        <label htmlFor="cmd" className="flex h-full items-center gap-[3px] bg-[#b9bbbc] pl-1 pr-[6px]" aria-label="命令">
          <svg width="16" height="12" viewBox="0 0 16 12" fill="none" stroke="#55585b"><path d="M.500.500h15v11H.500zM0 1.500h16M3 4l2 2-2 2M6 8.500h4" /></svg>
          <svg width="7" height="4" viewBox="0 0 7 4" fill="#55585b"><path d="M0 0h7L3.500 4z" /></svg>
        </label>
        <input id="cmd" placeholder="键入命令" className="h-full min-w-0 flex-1 bg-[#b9bbbc] pb-[2px] text-[13px] italic outline-none placeholder:text-[#66696c]" />
        <button type="button" aria-label="命令历史" className="flex h-full w-3 items-center justify-center bg-[#b9bbbc]">
          <svg width="7" height="4" viewBox="0 0 7 4" fill="#55585b"><path d="M0 4h7L3.500 0z" /></svg>
        </button>
      </form>
    </main>
  );
}

// status toggles, left to right; d is the drawing in a 22x16 box
const STATUS = [
  { name: "栅格", w: "w-8", d: "M4 8h14M7 4v12M11 4v12M15 4v12M4 12h14" },
  { name: "捕捉", w: "w-8", d: "M2 6h2M6 6h2M10 6h2M2 9h2M6 9h2M10 9h2", end: true },
  { name: "推断约束", w: "w-7", d: "M8 16V5h8v11" },
  { name: "动态输入", w: "w-[22px]", d: "M7 4v11h11", on: true },
  { name: "正交", w: "w-7", d: "M7 4v11h10" },
  { name: "极轴", w: "w-9", d: "M4 16a6 6 0 1 1 12 0M8 13l10-9" },
  { name: "等轴测", w: "w-[43px]", d: "M12 4v12M2 5l6 6" },
  { name: "追踪", w: "w-[22px]", d: "M4 15L18 5", on: true },
  { name: "对象捕捉", w: "w-[43px]", d: "M3 5h5v11M8 8h11", end: true },
  { name: "线宽", w: "w-[25px]", d: "M2 5h16M2 7h9M2 11h16" },
  { name: "透明度", w: "w-[22px]", d: "M4 5h14v11H4zM8 9v4M13 9v4", on: true },
  { name: "选择循环", w: "w-[26px]", d: "M7 4v12M4 8h7", end: true },
  { name: "三维捕捉", w: "w-[44px]", d: "M4 16V9l4-5h9v11" },
  { name: "动态 UCS", w: "w-[22px]", d: "M4 15l4-10 3 10M12 14l4-8", on: true },
  { name: "过滤", w: "w-[43px]", d: "M4 16V9l4-5h9v11" },
  { name: "小控件", w: "w-[22px]", d: "M11 4v12M6 9l5-4 5 4", on: true },
  { name: "注释监视", w: "w-[21px]", d: "" },
  { name: "注释可见", w: "w-[22px]", d: "M4 14l4-9v11M12 6h5v9", on: true },
  { name: "自动缩放", w: "w-7", d: "M12 5l-4 9M16 5l-3 10M8 7l3 3" },
  { name: "比例图标", w: "w-6", d: "M9 16l3-10 3 10" },
];

const STATUS_END = [
  { name: "工作空间", w: "w-11", d: "M6 8h12M12 4v12M8 5l8 9M16 5l-8 9" },
  { name: "注释监视器", w: "w-6", d: "M11 4v12M5 11h12" },
  { name: "单位", w: "w-[30px]", d: "M8 16V5h8M8 7h8" },
  { name: "快捷特性", w: "w-8", d: "M5 5h13v11H5zM5 7h13" },
  { name: "锁定界面", w: "w-9", d: "M4 5h14M4 9h14M6 5v10" },
  { name: "隔离对象", w: "w-7", d: "M4 16V5h5v11M14 16V9h4" },
  { name: "硬件加速", w: "w-[22px]", d: "M5 15a6 6 0 1 1 12 0", on: true },
  { name: "全屏显示", w: "w-[26px]", d: "M4 16V8h14v8" },
  { name: "自定义", w: "w-[26px]", d: "M3 5h16M3 10h16" },
];

function Toggles({ items }) {
  return items.map((s) => (
    <button key={s.name} type="button" aria-label={s.name} className={`flex h-5 shrink-0 justify-center ${s.w} ${s.on ? "bg-[#5a8dc4]" : "bg-[#3b4453]"} ${s.end ? "border-r-2 border-[#262c36]" : ""}`}>
      <svg width="22" height="16" viewBox="0 0 22 16" fill="none" stroke={W} strokeWidth="1.500" shapeRendering="crispEdges"><path d={s.d} /></svg>
    </button>
  ));
}

function StatusBar() {
  return (
    <footer className="h-[10px] shrink-0 overflow-hidden border-t border-[#4a4f57] text-[#c8ccd2]">
      <div className="flex h-5 items-start pl-[14px] pr-1 leading-[18px]">
        <button type="button" className="h-5 w-12 rounded-b-lg bg-[#3b4453] font-bold text-white">模型</button>
        <button type="button" className="h-5 w-[52px] rounded-b-lg bg-[#303744]">布局1</button>
        <button type="button" className="ml-[2px] h-5 w-[52px] rounded-b-lg bg-[#303744]">布局2</button>
        <button type="button" aria-label="新建布局" className="ml-[2px] flex h-5 w-6 justify-center rounded-b-lg bg-[#303744] pt-1">
          <svg width="8" height="8" viewBox="0 0 8 8" stroke="#c8ccd2" strokeWidth="1.500"><path d="M0 4h8M4 0v8" /></svg>
        </button>
        <div className="ml-auto flex pt-[2px]">
          <span className="h-5 w-[183px] border-r-2 border-[#262c36] bg-[#3b4453] pr-1 text-right whitespace-nowrap">642.8538, 572.3864, 0.0000</span>
          <button type="button" className="h-5 w-[33px] border-r-2 border-[#262c36] bg-[#3b4453]">模型</button>
          <Toggles items={STATUS} />
          <span className="h-5 w-[72px] border-r-2 border-[#262c36] bg-[#3b4453] whitespace-nowrap text-center">1:1 / 100%</span>
          <Toggles items={STATUS_END.slice(0, 3)} />
          <span className="h-5 w-[71px] border-r-2 border-[#262c36] bg-[#3b4453] pl-[6px]">小数</span>
          <Toggles items={STATUS_END.slice(3)} />
        </div>
      </div>
    </footer>
  );
}

export default function App() {
  return (
    <div className="flex h-screen overflow-hidden border-r-2 border-l-2 border-l-white border-r-[#dcdcdc] bg-[#222830] font-['Noto_Sans','Noto_Sans_CJK_SC',sans-serif] text-[12px] leading-4">
      <div className="flex min-w-0 flex-1 flex-col border-x-2 border-t border-x-[#12659a] border-t-[#2288b0]">
        <TitleBar />
        <MenuBar />
        <RibbonTabs />
        <Ribbon />
        <FileTabs />
        <Canvas />
        <StatusBar />
      </div>
    </div>
  );
}
